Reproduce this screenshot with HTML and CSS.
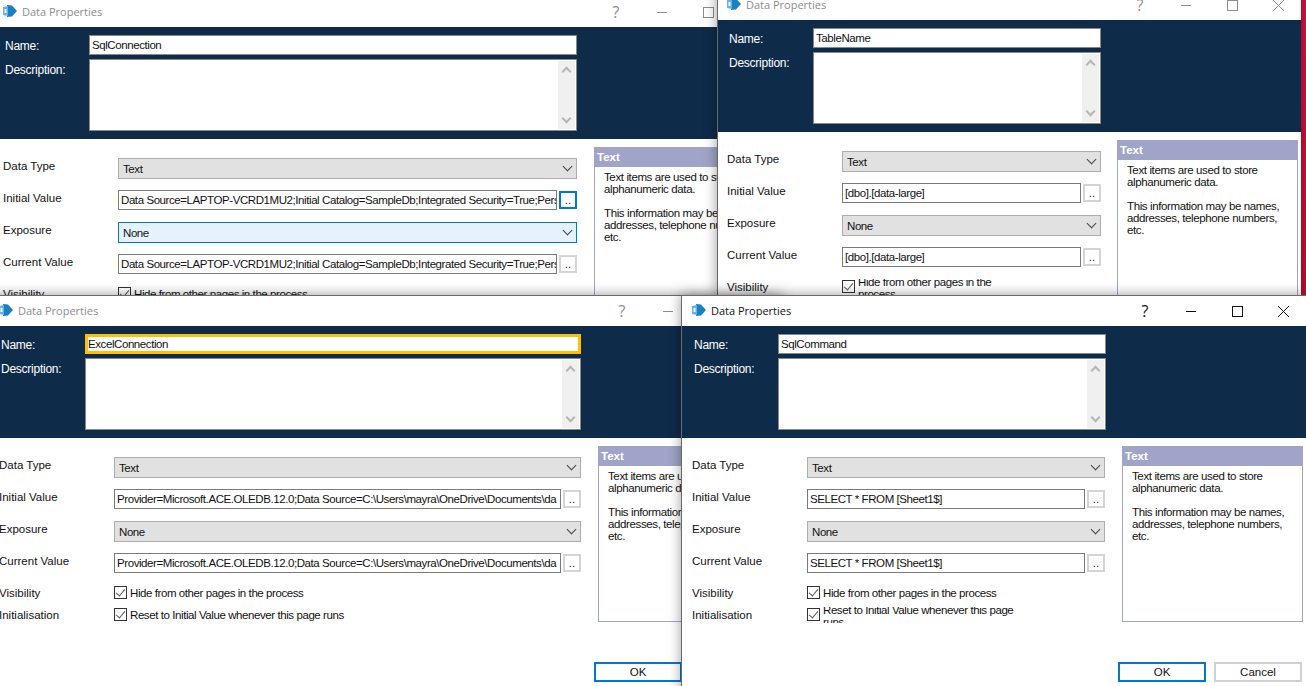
FILE: index.html
```html
<!DOCTYPE html>
<html lang="en">

<head>
    <meta charset="UTF-8">
    <title>Data Properties</title>
    <link rel="stylesheet" href="styles.css">
</head>

<body>
    <!-- icon used by all four title bars -->
    <svg class="defs" width="0" height="0">
        <symbol id="appIcon" viewBox="0 0 14 12">
            <path d="M4 0 L9 0.5 L14 6 L9 11.5 L4 12 Z" fill="#1a80c4"/>
            <path d="M0 2 L5 1 L5 11 L0 10 Z" fill="#63b4e4"/>
            <path d="M1.5 4 H3.5 V8 H1.5 Z" fill="#fff"/>
        </symbol>
    </svg>

    <!-- SqlConnection -->
    <section class="win win-a">
        <div class="titlebar inactive">
            <svg class="app-icon"><use href="#appIcon"/></svg>
            <span class="title">Data Properties</span>
            <span class="ctl help">?</span>
            <span class="ctl"><i class="min"></i></span>
            <span class="ctl"><i class="max"></i></span>
            <span class="ctl"><i class="close"></i></span>
        </div>
        <div class="head">
            <label class="head-label">Name:</label>
            <div class="name-box">SqlConnection</div>
            <label class="head-label">Description:</label>
            <div class="desc-box"><div class="scroll"><i class="up"></i><i class="down"></i></div></div>
        </div>
        <div class="body">
            <div class="form">
                <label>Data Type</label>
                <div class="select">Text<i class="chev"></i></div>
                <label>Initial Value</label>
                <div class="input-row">
                    <div class="input">Data Source=LAPTOP-VCRD1MU2;Initial Catalog=SampleDb;Integrated Security=True;Pers</div>
                    <div class="dots focus">..</div>
                </div>
                <label>Exposure</label>
                <div class="select hot">None<i class="chev"></i></div>
                <label>Current Value</label>
                <div class="input-row">
                    <div class="input">Data Source=LAPTOP-VCRD1MU2;Initial Catalog=SampleDb;Integrated Security=True;Pers</div>
                    <div class="dots">..</div>
                </div>
                <label>Visibility</label>
                <div class="check"><i class="box"></i><span>Hide from other pages in the process</span></div>
            </div>
            <aside class="info">
                <h4>Text</h4>
                <p>Text items are used to store alphanumeric data.</p>
                <p>This information may be names, addresses, telephone numbers, etc.</p>
            </aside>
        </div>
    </section>

    <!-- TableName -->
    <section class="win win-b">
        <div class="titlebar inactive">
            <svg class="app-icon"><use href="#appIcon"/></svg>
            <span class="title">Data Properties</span>
            <span class="ctl help">?</span>
            <span class="ctl"><i class="min"></i></span>
            <span class="ctl"><i class="max"></i></span>
            <span class="ctl"><i class="close"></i></span>
        </div>
        <div class="head">
            <label class="head-label">Name:</label>
            <div class="name-box">TableName</div>
            <label class="head-label">Description:</label>
            <div class="desc-box"><div class="scroll"><i class="up"></i><i class="down"></i></div></div>
        </div>
        <div class="body">
            <div class="form">
                <label>Data Type</label>
                <div class="select">Text<i class="chev"></i></div>
                <label>Initial Value</label>
                <div class="input-row">
                    <div class="input">[dbo].[data-large]</div>
                    <div class="dots">..</div>
                </div>
                <label>Exposure</label>
                <div class="select">None<i class="chev"></i></div>
                <label>Current Value</label>
                <div class="input-row">
                    <div class="input">[dbo].[data-large]</div>
                    <div class="dots">..</div>
                </div>
                <label>Visibility</label>
                <div class="check wrapped"><i class="box"></i><span>Hide from other pages in the process</span></div>
            </div>
            <aside class="info">
                <h4>Text</h4>
                <p>Text items are used to store alphanumeric data.</p>
                <p>This information may be names, addresses, telephone numbers, etc.</p>
            </aside>
        </div>
    </section>

    <!-- ExcelConnection -->
    <section class="win win-c">
        <div class="titlebar inactive">
            <svg class="app-icon"><use href="#appIcon"/></svg>
            <span class="title">Data Properties</span>
            <span class="ctl help">?</span>
            <span class="ctl"><i class="min"></i></span>
            <span class="ctl"><i class="max"></i></span>
            <span class="ctl"><i class="close"></i></span>
        </div>
        <div class="head">
            <label class="head-label">Name:</label>
            <div class="name-box active">ExcelConnection</div>
            <label class="head-label">Description:</label>
            <div class="desc-box"><div class="scroll"><i class="up"></i><i class="down"></i></div></div>
        </div>
        <div class="body">
            <div class="form">
                <label>Data Type</label>
                <div class="select">Text<i class="chev"></i></div>
                <label>Initial Value</label>
                <div class="input-row">
                    <div class="input">Provider=Microsoft.ACE.OLEDB.12.0;Data Source=C:\Users\mayra\OneDrive\Documents\da</div>
                    <div class="dots">..</div>
                </div>
                <label>Exposure</label>
                <div class="select">None<i class="chev"></i></div>
                <label>Current Value</label>
                <div class="input-row">
                    <div class="input">Provider=Microsoft.ACE.OLEDB.12.0;Data Source=C:\Users\mayra\OneDrive\Documents\da</div>
                    <div class="dots">..</div>
                </div>
                <label>Visibility</label>
                <div class="check"><i class="box"></i><span>Hide from other pages in the process</span></div>
                <label>Initialisation</label>
                <div class="check"><i class="box"></i><span>Reset to Initial Value whenever this page runs</span></div>
            </div>
            <aside class="info">
                <h4>Text</h4>
                <p>Text items are used to store alphanumeric data.</p>
                <p>This information may be names, addresses, telephone numbers, etc.</p>
            </aside>
        </div>
        <div class="buttons">
            <div class="btn primary">OK</div>
        </div>
    </section>

    <!-- SqlCommand, the active one -->
    <section class="win win-d">
        <div class="titlebar">
            <svg class="app-icon"><use href="#appIcon"/></svg>
            <span class="title">Data Properties</span>
            <span class="ctl help">?</span>
            <span class="ctl"><i class="min"></i></span>
            <span class="ctl"><i class="max"></i></span>
            <span class="ctl"><i class="close"></i></span>
        </div>
        <div class="head">
            <label class="head-label">Name:</label>
            <div class="name-box">SqlCommand</div>
            <label class="head-label">Description:</label>
            <div class="desc-box"><div class="scroll"><i class="up"></i><i class="down"></i></div></div>
        </div>
        <div class="body">
            <div class="form">
                <label>Data Type</label>
                <div class="select">Text<i class="chev"></i></div>
                <label>Initial Value</label>
                <div class="input-row">
                    <div class="input">SELECT * FROM [Sheet1$]</div>
                    <div class="dots">..</div>
                </div>
                <label>Exposure</label>
                <div class="select">None<i class="chev"></i></div>
                <label>Current Value</label>
                <div class="input-row">
                    <div class="input">SELECT * FROM [Sheet1$]</div>
                    <div class="dots">..</div>
                </div>
                <label>Visibility</label>
                <div class="check"><i class="box"></i><span>Hide from other pages in the process</span></div>
                <label>Initialisation</label>
                <div class="check wrapped"><i class="box"></i><span>Reset to Initial Value whenever this page runs</span></div>
            </div>
            <aside class="info">
                <h4>Text</h4>
                <p>Text items are used to store alphanumeric data.</p>
                <p>This information may be names, addresses, telephone numbers, etc.</p>
            </aside>
        </div>
        <div class="buttons">
            <div class="btn primary">OK</div>
            <div class="btn">Cancel</div>
        </div>
    </section>
</body>

</html>
```

FILE: styles.css
```css
html, body {
    margin: 0;
    height: 100%;
}

body {
    position: relative;
    overflow: hidden;
    background: linear-gradient(#dc1240, #a80c20);
    font-family: "Liberation Sans", Arial, sans-serif;
    font-size: 11.5px;
    color: #111;
}

.defs {
    position: absolute;
}

/* windows on the desktop */
.win {
    position: absolute;
    display: flex;
    flex-direction: column;
    box-sizing: border-box;
    background: #fff;
    overflow: hidden;
    border-top: 1px solid #6a6a6a;
    border-left: 1px solid #6a6a6a;
    box-shadow: 0 0 12px rgba(0, 0, 0, 0.4);
}

.win-a { left: -7px; top: -4px; width: 784px; height: 299px; }
.win-b { left: 717px; top: -11px; width: 584px; height: 306px; }
.win-c { left: -11px; top: 295px; width: 794px; height: 400px; }
.win-d { left: 681px; top: 295px; width: 625px; height: 400px; }

.win-a .head { grid-template-columns: 84px 488px; }
.win-b .head { grid-template-columns: 84px 288px; }
.win-c .head { grid-template-columns: 84px 496px; }
.win-d .head { grid-template-columns: 84px 328px; padding-left: 12px; }
.win-a .form { width: 574px; }
.win-b .form { width: 374px; margin-right: 16px; }
.win-c .form { width: 582px; }
.win-d .form { width: 413px; }
.win-d .body { padding-left: 10px; }
.win-d .titlebar { padding-left: 10px; }
.win-c .buttons { padding-left: 604px; }
.win-d .buttons { padding-left: 436px; }

/* title bar */
.titlebar {
    display: flex;
    align-items: center;
    height: 30px;
    padding-left: 9px;
    flex: none;
    color: #111;
}

.title {
    margin-left: 5px;
    margin-top: -2px;
    font-family: "Open Sans", sans-serif;
    font-size: 11px;
    flex: 1;
}

.titlebar.inactive {
    color: #8c8c8c;
}

.app-icon {
    width: 14px;
    height: 12px;
    margin-top: -2px;
}

.ctl {
    width: 46px;
    height: 30px;
    display: flex;
    align-items: center;
    justify-content: center;
}

.help {
    font-family: "Open Sans", sans-serif;
    font-size: 16px;
}

.min {
    width: 10px;
    height: 1px;
    background: currentColor;
}

.max {
    width: 9px;
    height: 9px;
    border: 1px solid currentColor;
}

.close {
    width: 11px;
    height: 11px;
    background:
        linear-gradient(45deg, transparent 46%, currentColor 46%, currentColor 54%, transparent 54%),
        linear-gradient(-45deg, transparent 46%, currentColor 46%, currentColor 54%, transparent 54%);
}

/* navy name block */
.head {
    display: grid;
    row-gap: 4px;
    height: 112px;
    box-sizing: border-box;
    padding: 8px 0 0 11px;
    background: #0f2b4a;
    flex: none;
    align-content: start;
}

.head-label {
    color: #fff;
    padding-top: 4px;
    font-size: 12px;
    letter-spacing: -0.25px;
}

.name-box, .input, .select, .check {
    letter-spacing: -0.42px;
}

.name-box {
    box-sizing: border-box;
    height: 20px;
    line-height: 19px;
    padding-left: 2px;
    background: #fff;
    border: 1px solid #888;
}

.name-box.active {
    border: 3px solid #ffc000;
    line-height: 14px;
    padding-left: 0;
}

.desc-box {
    box-sizing: border-box;
    height: 72px;
    display: flex;
    justify-content: flex-end;
    background: #fff;
    border: 1px solid #888;
}

.scroll {
    position: relative;
    width: 17px;
    margin: 1px;
    background: #f0f0f0;
}

.up, .down {
    position: absolute;
    left: 5px;
    width: 5px;
    height: 5px;
    border: solid #b5b5b5;
    border-width: 2px 0 0 2px;
    transform: rotate(45deg);
}

.up { top: 7px; }

.down {
    bottom: 7px;
    transform: rotate(225deg);
}

/* lower form */
.body {
    display: flex;
    flex: none;
    box-sizing: border-box;
    height: 184px;
    padding: 8px 0 0 9px;
}

.form {
    display: grid;
    grid-template-columns: 115px minmax(0, 1fr);
    grid-template-rows: repeat(4, 32px) 22px 22px;
    margin-top: 11px;
    margin-right: 17px;
    flex: none;
}

.form label {
    padding-top: 2px;
}

.select {
    position: relative;
    box-sizing: border-box;
    height: 21px;
    line-height: 20px;
    padding-left: 4px;
    background: #e1e1e1;
    border: 1px solid #adadad;
}

.select.hot {
    background: #e5f1fb;
    border-color: #0078d7;
}

.chev {
    position: absolute;
    right: 5px;
    top: 4px;
    width: 6px;
    height: 6px;
    border: solid #444;
    border-width: 0 1px 1px 0;
    transform: rotate(45deg);
}

.input-row {
    display: flex;
    height: 21px;
}

.input {
    box-sizing: border-box;
    flex: 1;
    min-width: 0;
    height: 20px;
    line-height: 18px;
    padding-left: 2px;
    margin-right: 2px;
    white-space: nowrap;
    overflow: hidden;
    background: #fff;
    border: 1px solid #7a7a7a;
}

.dots {
    box-sizing: border-box;
    flex: none;
    width: 18px;
    height: 18px;
    margin-top: 1px;
    line-height: 15px;
    text-align: center;
    background: #fff;
    border: 2px solid #d4d4d4;
}

.dots.focus {
    border-color: #0078d7;
}

.check {
    display: flex;
    align-items: flex-start;
    gap: 3px;
    overflow: hidden;
}

.check span {
    margin-top: 2px;
    white-space: nowrap;
}

.box {
    flex: none;
    box-sizing: border-box;
    position: relative;
    width: 13px;
    height: 13px;
    margin-top: 1px;
    background: #fff;
    border: 1px solid #333;
}

.box::after {
    content: "";
    position: absolute;
    left: 3px;
    top: 0;
    width: 4px;
    height: 8px;
    border: solid #555;
    border-width: 0 1.5px 1.5px 0;
    transform: rotate(40deg);
}

/* checks whose label wraps and is cut off by the row */
.check.wrapped {
    height: 16px;
}

.check.wrapped span {
    margin-top: -3px;
    line-height: 12px;
    white-space: normal;
}

.win-b .check.wrapped { width: 180px; }
.win-d .check.wrapped { width: 212px; }

/* help panel */
.info {
    box-sizing: border-box;
    width: 181px;
    height: 176px;
    flex: none;
    border: 1px solid #a0a4c8;
    border-top: 0;
}

.info h4 {
    margin: 0 -1px;
    height: 20px;
    line-height: 20px;
    padding-left: 3px;
    font-size: 11.5px;
    color: #fff;
    background: #a0a4c8;
}

.info p {
    margin: 4px 6px 12px 9px;
    line-height: 12px;
    letter-spacing: -0.38px;
}

.info p + p {
    margin-top: 12px;
}

/* bottom buttons */
.buttons {
    display: flex;
    gap: 8px;
    flex: none;
    margin-top: 40px;
}

.btn {
    box-sizing: border-box;
    width: 88px;
    height: 20px;
    line-height: 16px;
    text-align: center;
    background: #fff;
    border: 2px solid #d0d0d0;
}

.btn.primary {
    border-color: #0078d7;
}
```
